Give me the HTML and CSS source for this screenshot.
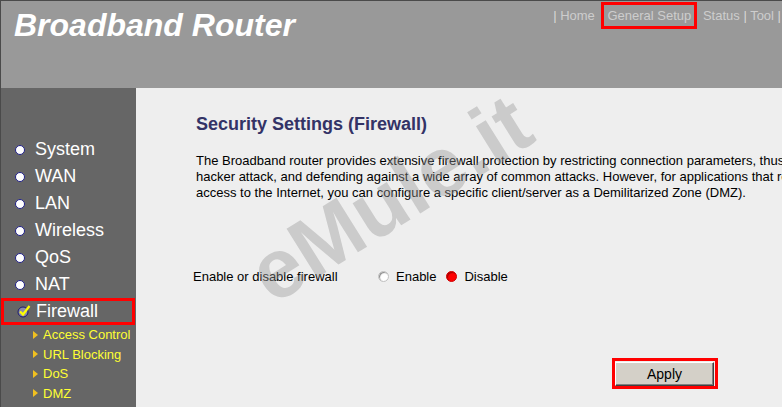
FILE: index.html
```html
<!DOCTYPE html>
<html lang="en">
<head>
    <meta charset="UTF-8">
    <title>Broadband Router - Firewall</title>
    <link rel="stylesheet" href="styles.css">
</head>
<body>
    <div class="frame">
        <div class="header">
            <div class="brand">Broadband Router</div>
            <div class="topnav">
                <span class="sep">|</span> Home
                <span class="mark">General Setup</span>
                Status <span class="sep">|</span> Tool <span class="sep">|</span>
            </div>
        </div>
        <div class="main">
            <div class="sidebar">
                <div class="item"><span class="dot"></span>System</div>
                <div class="item"><span class="dot"></span>WAN</div>
                <div class="item"><span class="dot"></span>LAN</div>
                <div class="item"><span class="dot"></span>Wireless</div>
                <div class="item"><span class="dot"></span>QoS</div>
                <div class="item"><span class="dot"></span>NAT</div>
                <div class="item active">
                    <svg class="check" width="14" height="14" viewBox="0 0 14 14">
                        <circle cx="6" cy="8" r="5" fill="#8c8ca8" stroke="#1a1a70" stroke-width="1"/>
                        <path d="M3 7.5 L6 10.5 L12.5 2" fill="none" stroke="#ffff00" stroke-width="2.2"/>
                    </svg>Firewall
                </div>
                <div class="sub"><span class="arrow"></span>Access Control</div>
                <div class="sub"><span class="arrow"></span>URL Blocking</div>
                <div class="sub"><span class="arrow"></span>DoS</div>
                <div class="sub"><span class="arrow"></span>DMZ</div>
            </div>
            <div class="content">
                <h1>Security Settings (Firewall)</h1>
                <p class="intro">The Broadband router provides extensive firewall protection by restricting connection parameters, thus limiting the risk of<br>hacker attack, and defending against a wide array of common attacks. However, for applications that require unrestricted<br>access to the Internet, you can configure a specific client/server as a Demilitarized Zone (DMZ).</p>
                <div class="row">
                    <span class="label">Enable or disable firewall</span>
                    <span class="radio"></span><span class="opt">Enable</span>
                    <span class="radio on"></span><span class="opt">Disable</span>
                </div>
                <div class="actions">
                    <span class="mark-btn"><button type="button">Apply</button></span>
                </div>
                <div class="watermark">eMule.it</div>
            </div>
        </div>
    </div>
</body>
</html>
```

FILE: styles.css
```css
* {
    margin: 0;
    padding: 0;
    box-sizing: border-box;
}

body {
    font-family: "Liberation Sans", Arial, sans-serif;
    width: 782px;
    height: 407px;
    overflow: hidden;
    background: #eeeeee;
}

.frame {
    border-top: 1px solid #4a4a4a;
    border-left: 1px solid #4a4a4a;
    height: 407px;
    display: flex;
    flex-direction: column;
}

.header {
    height: 87px;
    background: #999999;
    display: flex;
    align-items: flex-start;
}

.brand {
    color: #ffffff;
    font-size: 32px;
    font-weight: bold;
    font-style: italic;
    padding: 6px 0 0 13px;
    white-space: nowrap;
}

.topnav {
    margin-left: auto;
    padding-top: 1px;
    padding-right: 1px;
    color: #cdcdcd;
    font-size: 13px;
    white-space: nowrap;
    line-height: 27px;
}

.sep {
    color: #d8d8d8;
}

.mark {
    display: inline-block;
    border: 3px solid #ff0000;
    padding: 0 3px;
    line-height: 21px;
    margin: 0 2px 0 3px;
}

.main {
    flex: 1;
    display: flex;
}

.sidebar {
    width: 135px;
    background: #666666;
    padding-top: 48px;
    flex-shrink: 0;
}

.item {
    height: 27px;
    display: flex;
    align-items: center;
    color: #ffffff;
    font-size: 18px;
    padding-left: 13px;
}

.dot {
    width: 10px;
    height: 10px;
    border-radius: 50%;
    background: #ffffff;
    border: 1px solid #20208a;
    margin-right: 10px;
    margin-left: 1px;
}

.item.active {
    border: 3px solid #ff0000;
    padding-left: 13px;
    margin-right: 1px;
}

.check {
    margin-right: 5px;
    margin-top: -2px;
}

.sub {
    height: 19.5px;
    display: flex;
    align-items: center;
    color: #ffff33;
    font-size: 13px;
    padding-left: 32px;
}

.sub:first-of-type {
    margin-top: 1px;
}

.arrow {
    width: 0;
    height: 0;
    border-top: 4px solid transparent;
    border-bottom: 4px solid transparent;
    border-left: 5px solid #f0c020;
    margin-right: 5px;
}

.content {
    flex: 1;
    background: #eeeeee;
    padding: 26px 0 0 60px;
    position: relative;
    white-space: nowrap;
    overflow: hidden;
}

h1 {
    font-size: 18px;
    line-height: 20px;
    color: #333366;
}

.intro {
    margin-top: 19px;
    font-size: 13px;
    line-height: 16px;
    color: #000000;
}

.row {
    margin-top: 67px;
    margin-left: -3px;
    height: 16px;
    display: flex;
    align-items: center;
    font-size: 13px;
}

.label {
    width: 185px;
}

.radio {
    width: 11px;
    height: 11px;
    border-radius: 50%;
    background: #ffffff;
    border: 1px solid #c0c0c0;
    box-shadow: inset 1px 1px 1px #888888;
    margin-right: 7px;
}

.radio.on {
    background: #ff0000;
    border-color: #d00000;
    box-shadow: inset 1px 1px 1px #a00000;
}

.opt {
    margin-right: 10px;
}

.actions {
    margin-top: 74px;
    margin-left: 416px;
}

.mark-btn {
    display: inline-block;
    border: 3px solid #ff0000;
    padding: 1px 1px 0 0;
}

button {
    width: 99px;
    height: 24px;
    background: #d4d0c8;
    border: 1px solid;
    border-color: #ffffff #404040 #404040 #ffffff;
    box-shadow: inset -1px -1px 0 #808080;
    font-family: "Liberation Sans", Arial, sans-serif;
    font-size: 14px;
    color: #000000;
    display: block;
}

.watermark {
    position: absolute;
    left: 98px;
    top: 62px;
    font-size: 84px;
    font-weight: bold;
    color: rgba(150, 150, 150, 0.4);
    transform: rotate(-32deg);
    transform-origin: center;
    pointer-events: none;
}
```
